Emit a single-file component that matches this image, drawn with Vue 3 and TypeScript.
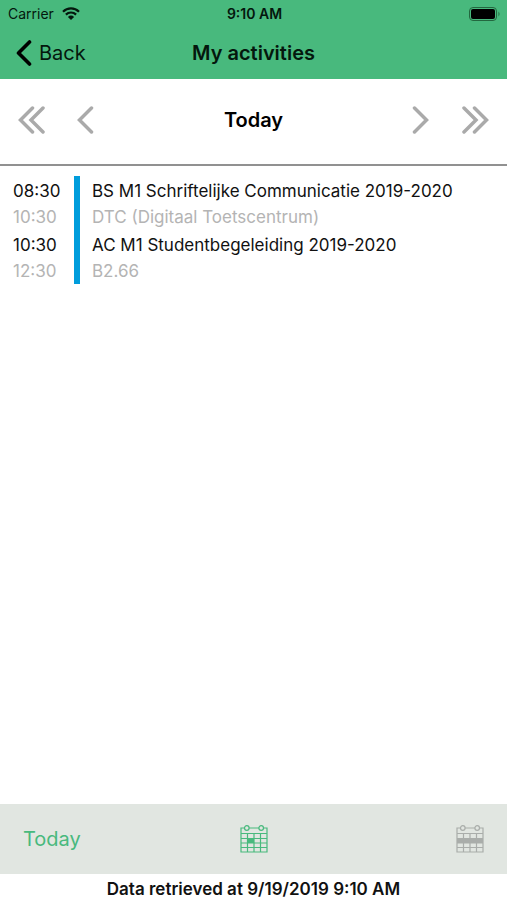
<script setup lang="ts">
interface Activity {
  start: string
  end: string
  title: string
  location: string
}

const activities: Activity[] = [
  { start: '08:30', end: '10:30', title: 'BS M1 Schriftelijke Communicatie 2019-2020', location: 'DTC (Digitaal Toetscentrum)' },
  { start: '10:30', end: '12:30', title: 'AC M1 Studentbegeleiding 2019-2020', location: 'B2.66' },
]
</script>

<template>
  <div class="screen">
    <header class="top">
      <div class="status">
        <span class="carrier">
          Carrier
          <svg width="18" height="13" viewBox="0 0 18 13" aria-hidden="true">
            <path d="M1 4.700a11.400 11.400 0 0 1 16 0M3.900 7.600a7.200 7.200 0 0 1 10.200 0" fill="none" stroke="#04170d" stroke-width="2.200" />
            <path d="M9 13l-3.100-3.100a4.400 4.400 0 0 1 6.200 0z" fill="#04170d" />
          </svg>
        </span>
        <span class="clock">9:10 AM</span>
        <svg class="battery" width="32" height="14" viewBox="0 0 32 14" aria-hidden="true">
          <rect x="0.500" y="0.500" width="27" height="13" rx="3.500" fill="none" stroke="#23673f" />
          <rect x="2" y="2" width="24" height="10" rx="2" fill="#000" />
          <path d="M29.500 4.500q2 2.500 0 5z" fill="#23673f" />
        </svg>
      </div>
      <nav class="titlebar">
        <button type="button" class="back">
          <svg width="16" height="26" viewBox="0 0 16 26" aria-hidden="true">
            <path d="M13.500 2L2.500 13l11 11" fill="none" stroke="#000" stroke-width="3.600" stroke-linecap="round" stroke-linejoin="round" />
          </svg>
          Back
        </button>
        <h1>My activities</h1>
      </nav>
    </header>

    <section class="pager">
      <div class="arrows">
        <button type="button" aria-label="Previous week">
          <svg width="28" height="28" viewBox="0 0 28 28"><path d="M14.500 2L2.500 14l12 12M25 2L13 14l12 12" /></svg>
        </button>
        <button type="button" aria-label="Previous day">
          <svg width="18" height="28" viewBox="0 0 18 28"><path d="M14.500 2L2.500 14l12 12" /></svg>
        </button>
      </div>
      <h2>Today</h2>
      <div class="arrows end">
        <button type="button" aria-label="Next day">
          <svg width="18" height="28" viewBox="0 0 18 28"><path d="M2.500 2l12 12-12 12" /></svg>
        </button>
        <button type="button" aria-label="Next week">
          <svg width="28" height="28" viewBox="0 0 28 28"><path d="M3 2l12 12L3 26M13.500 2l12 12-12 12" /></svg>
        </button>
      </div>
    </section>

    <main>
      <ul class="list">
        <li v-for="item in activities" :key="item.start" class="activity">
          <div class="times">
            <p>{{ item.start }}</p>
            <p class="muted">{{ item.end }}</p>
          </div>
          <div class="details">
            <p>{{ item.title }}</p>
            <p class="muted">{{ item.location }}</p>
          </div>
        </li>
      </ul>
    </main>

    <footer>
      <nav class="toolbar">
        <button type="button" class="today">Today</button>
        <button type="button" class="view" aria-label="Day view">
          <svg width="28" height="28" viewBox="0 0 28 28">
            <path class="grid" d="M4.500 3h-3.500v24h26v-24h-3.500M9 3h10M1 8.500h26M1 13.500h26M1 18h26M1 22.500h26M7.500 8.500v18.500M14 8.500v18.500M20.500 8.500v18.500" />
            <circle class="grid" cx="6.800" cy="3" r="2.300" />
            <circle class="grid" cx="21.200" cy="3" r="2.300" />
            <rect x="7" y="13" width="7" height="5" fill="currentColor" />
          </svg>
        </button>
        <button type="button" class="view week" aria-label="Week view">
          <svg width="28" height="28" viewBox="0 0 28 28">
            <path class="grid" d="M4.500 3h-3.500v24h26v-24h-3.500M9 3h10M1 8.500h26M1 13.500h26M1 18h26M1 22.500h26M7.500 8.500v18.500M14 8.500v18.500M20.500 8.500v18.500" />
            <circle class="grid" cx="6.800" cy="3" r="2.300" />
            <circle class="grid" cx="21.200" cy="3" r="2.300" />
            <rect x="1" y="13" width="26" height="5" fill="currentColor" />
          </svg>
        </button>
      </nav>
      <p class="retrieved">Data retrieved at 9/19/2019 9:10 AM</p>
    </footer>
  </div>
</template>

<style>
body {
  margin: 0;
  background: #fff;
}
</style>

<style scoped>
.screen {
  display: flex;
  flex-direction: column;
  min-height: 100vh;
  font-family: Inter, "Liberation Sans", sans-serif;
  font-size: 17px;
  color: #111;
}
h1, h2, p, ul {
  margin: 0;
  padding: 0;
}
button {
  padding: 0;
  border: 0;
  background: none;
  font: inherit;
  color: inherit;
}
svg {
  display: block;
}
.top {
  background: #48b97d;
  color: #04170d;
}
.status,
.titlebar,
.pager {
  display: grid;
  grid-template-columns: 1fr auto 1fr;
  align-items: center;
}
.status {
  height: 27px;
  padding: 0 6px 0 8px;
  font-size: 14px;
}
.carrier {
  display: flex;
  align-items: center;
  gap: 8px;
}
.clock {
  font-weight: 600;
}
.battery {
  justify-self: end;
}
.titlebar {
  height: 52px;
  padding: 0 16px;
}
.back {
  display: flex;
  align-items: center;
  justify-self: start;
  gap: 7px;
  font-size: 20px;
}
h1,
h2 {
  font-size: 20px;
  font-weight: 600;
}
.pager {
  height: 82px;
  padding: 0 18px 3px;
  border-bottom: 2px solid #919191;
  color: #000;
}
.arrows {
  display: flex;
  gap: 31px;
}
.end {
  justify-content: flex-end;
}
.arrows path {
  fill: none;
  stroke: #aaa;
  stroke-width: 3.500;
  stroke-linecap: round;
}
main {
  flex: 1;
  padding: 10px 13px;
}
.list {
  list-style: none;
}
.activity {
  display: flex;
  line-height: 26px;
}
.times {
  width: 61px;
  padding-top: 2px;
}
.details {
  flex: 1;
  padding: 2px 0 0 12px;
  border-left: 6px solid #009ddc;
}
.muted {
  color: #b4b4b4;
}
.toolbar {
  display: grid;
  grid-template-columns: 1fr auto 1fr;
  align-items: center;
  height: 70px;
  padding: 0 23px;
  background: #e1e6e1;
}
.today {
  justify-self: start;
  font-size: 20px;
  color: #48b97d;
}
.view {
  color: #48b97d;
}
.week {
  justify-self: end;
  color: #a9adaa;
}
.grid {
  fill: none;
  stroke: currentColor;
  stroke-width: 1.200;
}
.retrieved {
  padding-top: 4px;
  font-weight: 600;
  line-height: 22px;
  text-align: center;
}
</style>
